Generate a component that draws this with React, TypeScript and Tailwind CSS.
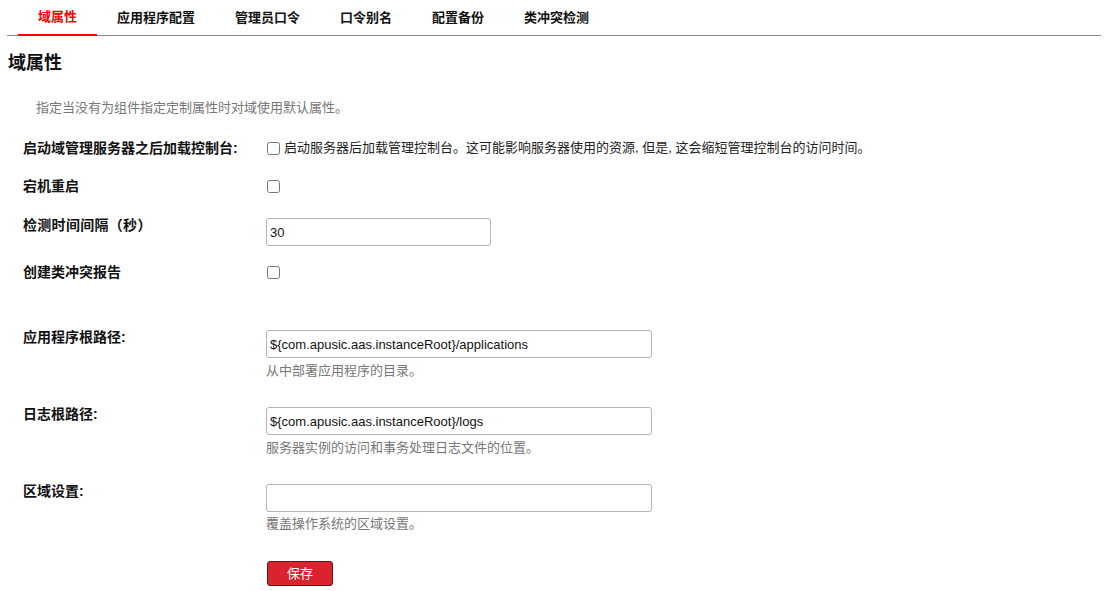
const tabs = ['域属性', '应用程序配置', '管理员口令', '口令别名', '配置备份', '类冲突检测'];

const labelCls = 'w-[243px] shrink-0 text-[14px] leading-[18px] font-bold text-[#111]';
const inputCls =
  'h-[28px] border border-[#b4b4b4] rounded-[3px] bg-white px-[3px] text-[13px] text-[#111] outline-none';
const helpCls = 'text-[13px] leading-[18px] text-[#777]';

export default function App() {
  return (
    <div className="w-[1108px] h-[591px] bg-white overflow-hidden" style={{ fontFamily: '"Liberation Sans", "Noto Sans CJK SC", sans-serif' }}>
      {/* Tabs */}
      <div className="mx-[7px] h-[36px] border-b border-[#8a8a8a] flex pl-[11px]">
        {tabs.map((t, i) => (
          <div
            key={t}
            className={
              i === 0
                ? 'px-5 h-[36px] flex items-center text-[13px] font-bold text-[#f00] border-b-2 border-[#f00]'
                : 'px-5 h-[36px] flex items-center text-[13px] font-bold text-[#111]'
            }
          >
            {t}
          </div>
        ))}
      </div>

      <h1 className="mt-[15px] ml-[8px] text-[18px] leading-[24px] font-bold text-[#111]">域属性</h1>
      <p className="mt-[24px] ml-[36px] text-[13px] leading-[18px] text-[#777]">
        指定当没有为组件指定定制属性时对域使用默认属性。
      </p>

      <div className="pl-[23px]">
        {/* row 1 */}
        <div className="mt-[22px] flex items-center">
          <div className={labelCls}>启动域管理服务器之后加载控制台:</div>
          <input type="checkbox" className="w-[13px] h-[13px] m-0 ml-[1px]" />
          <span className="ml-[4px] text-[13px] leading-[18px] text-[#222]">
            启动服务器后加载管理控制台。这可能影响服务器使用的资源, 但是, 这会缩短管理控制台的访问时间。
          </span>
        </div>

        {/* row 2 */}
        <div className="mt-[20px] flex items-center">
          <div className={labelCls}>宕机重启</div>
          <input type="checkbox" className="w-[13px] h-[13px] m-0 ml-[1px]" />
        </div>

        {/* row 3 */}
        <div className="mt-[21px] flex items-start">
          <div className={labelCls + ' tracking-[0.3px]'}>检测时间间隔（秒）</div>
          <input className={inputCls + ' w-[225px] h-[27px] mt-[2px]'} defaultValue="30" />
        </div>

        {/* row 4 */}
        <div className="mt-[17px] flex items-center">
          <div className={labelCls}>创建类冲突报告</div>
          <input type="checkbox" className="w-[13px] h-[13px] m-0 ml-[1px]" />
        </div>

        {/* row 5 */}
        <div className="mt-[47px] flex items-start">
          <div className={labelCls}>应用程序根路径:</div>
          <div className="flex flex-col mt-[2px]">
            <input className={inputCls + ' w-[386px]'} defaultValue="${com.apusic.aas.instanceRoot}/applications" />
            <div className={helpCls + ' mt-[4px]'}>从中部署应用程序的目录。</div>
          </div>
        </div>

        {/* row 6 */}
        <div className="mt-[25px] flex items-start">
          <div className={labelCls}>日志根路径:</div>
          <div className="flex flex-col mt-[2px]">
            <input className={inputCls + ' w-[386px]'} defaultValue="${com.apusic.aas.instanceRoot}/logs" />
            <div className={helpCls + ' mt-[4px]'}>服务器实例的访问和事务处理日志文件的位置。</div>
          </div>
        </div>

        {/* row 7 */}
        <div className="mt-[25px] flex items-start">
          <div className={labelCls}>区域设置:</div>
          <div className="flex flex-col mt-[2px]">
            <input className={inputCls + ' w-[386px]'} defaultValue="" />
            <div className={helpCls + ' mt-[3px]'}>覆盖操作系统的区域设置。</div>
          </div>
        </div>

        <div className="mt-[28px] pl-[244px]">
          <button className="w-[66px] h-[25px] rounded-[3px] bg-[#d9232e] border border-[#6e1216] text-white text-[13px] leading-none">
            保存
          </button>
        </div>
      </div>
    </div>
  );
}
